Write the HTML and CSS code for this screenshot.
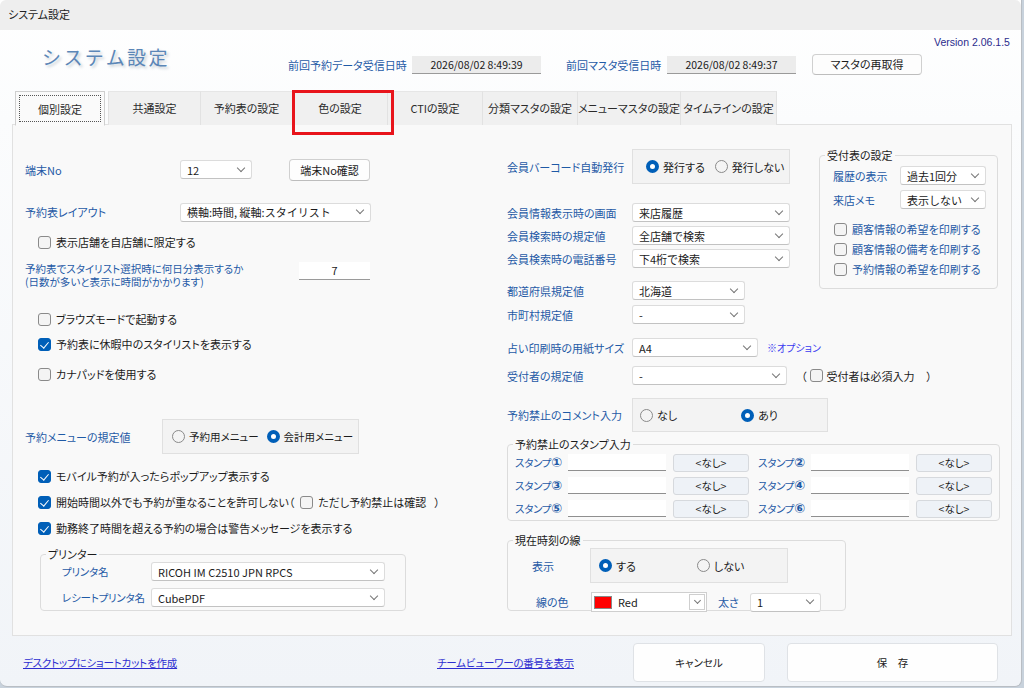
FILE: index.html
```html
<!DOCTYPE html>
<html lang="ja">

<head>
    <meta charset="UTF-8">
    <meta name="viewport" content="width=device-width, initial-scale=1.0">
    <title>システム設定</title>
    <link rel="stylesheet" href="styles.css">
</head>

<body>
    <div class="window">
        <div class="titlebar">システム設定</div>

        <div class="header">
            <div class="logo">システム設定</div>
            <div class="info">
                <span class="lbl">前回予約データ受信日時</span>
                <span class="datebox">2026/08/02 8:49:39</span>
                <span class="lbl lbl-2">前回マスタ受信日時</span>
                <span class="datebox">2026/08/02 8:49:37</span>
                <span class="btn btn-reget">マスタの再取得</span>
            </div>
            <div class="version">Version 2.06.1.5</div>
        </div>

        <ul class="tabs">
            <li class="tab active"><span>個別設定</span></li>
            <li class="tab t2">共通設定</li>
            <li class="tab t3">予約表の設定</li>
            <li class="tab t4 marked">色の設定</li>
            <li class="tab t5">CTIの設定</li>
            <li class="tab t6">分類マスタの設定</li>
            <li class="tab t7">メニューマスタの設定</li>
            <li class="tab t8">タイムラインの設定</li>
        </ul>

        <div class="panel">
            <!-- 左側 -->
            <div class="col-left">
                <div class="row r1">
                    <span class="label w155">端末No</span>
                    <span class="sel w72">12<i class="chev"></i></span>
                    <span class="btn btn-term">端末No確認</span>
                </div>
                <div class="row r2">
                    <span class="label w155">予約表レイアウト</span>
                    <span class="sel w191">横軸:時間, 縦軸:スタイリスト<i class="chev"></i></span>
                </div>
                <div class="row chk r3"><span class="cb"></span>表示店舗を自店舗に限定する</div>
                <div class="row r4">
                    <span class="label two w274"><span class="ln">予約表でスタイリスト選択時に何日分表示するか</span><span class="ln">(日数が多いと表示に時間がかかります)</span></span>
                    <span class="num">7</span>
                </div>
                <div class="row chk r5"><span class="cb"></span>ブラウズモードで起動する</div>
                <div class="row chk r6"><span class="cb on"></span>予約表に休暇中のスタイリストを表示する</div>
                <div class="row chk r7"><span class="cb"></span>カナパッドを使用する</div>
                <div class="row r8">
                    <span class="label w137">予約メニューの規定値</span>
                    <div class="radiobox rb-menu">
                        <span class="opt"><span class="rb"></span>予約用メニュー</span>
                        <span class="opt"><span class="rb on"></span>会計用メニュー</span>
                    </div>
                </div>
                <div class="row chk r9"><span class="cb on"></span>モバイル予約が入ったらポップアップ表示する</div>
                <div class="row chk r10"><span class="cb on"></span>開始時間以外でも予約が重なることを許可しない（
                    <span class="cb sub"></span>ただし予約禁止は確認 <span class="paren">）</span></div>
                <div class="row chk r11"><span class="cb on"></span>勤務終了時間を超える予約の場合は警告メッセージを表示する</div>

                <fieldset class="group printer">
                    <legend>プリンター</legend>
                    <div class="gbody">
                        <div class="row">
                            <span class="label w89">プリンタ名</span>
                            <span class="sel w234">RICOH IM C2510 JPN RPCS<i class="chev"></i></span>
                        </div>
                        <div class="row pr2">
                            <span class="label w89">レシートプリンタ名</span>
                            <span class="sel w234">CubePDF<i class="chev"></i></span>
                        </div>
                    </div>
                </fieldset>
            </div>

            <!-- 右側 -->
            <div class="col-right">
                <div class="top">
                    <div class="fields">
                        <div class="row q1">
                            <span class="label w125">会員バーコード自動発行</span>
                            <div class="radiobox rb-barcode">
                                <span class="opt"><span class="rb on"></span>発行する</span>
                                <span class="opt"><span class="rb"></span>発行しない</span>
                            </div>
                        </div>
                        <div class="row q2">
                            <span class="label w125">会員情報表示時の画面</span>
                            <span class="sel w158">来店履歴<i class="chev"></i></span>
                        </div>
                        <div class="row q3">
                            <span class="label w125">会員検索時の規定値</span>
                            <span class="sel w158">全店舗で検索<i class="chev"></i></span>
                        </div>
                        <div class="row q3">
                            <span class="label w125">会員検索時の電話番号</span>
                            <span class="sel w158">下4桁で検索<i class="chev"></i></span>
                        </div>
                        <div class="row q5">
                            <span class="label w125">都道府県規定値</span>
                            <span class="sel w113">北海道<i class="chev"></i></span>
                        </div>
                        <div class="row q6">
                            <span class="label w125">市町村規定値</span>
                            <span class="sel w113">-<i class="chev"></i></span>
                        </div>
                    </div>

                    <fieldset class="group reception">
                        <legend>受付表の設定</legend>
                        <div class="gbody">
                            <div class="row">
                                <span class="label w67">履歴の表示</span>
                                <span class="sel w86">過去1回分<i class="chev"></i></span>
                            </div>
                            <div class="row rc2">
                                <span class="label w67">来店メモ</span>
                                <span class="sel w86">表示しない<i class="chev"></i></span>
                            </div>
                            <div class="row chk blue rc3"><span class="cb"></span>顧客情報の希望を印刷する</div>
                            <div class="row chk blue rc4"><span class="cb"></span>顧客情報の備考を印刷する</div>
                            <div class="row chk blue rc4"><span class="cb"></span>予約情報の希望を印刷する</div>
                        </div>
                    </fieldset>
                </div>

                <div class="row q7">
                    <span class="label w125">占い印刷時の用紙サイズ</span>
                    <span class="sel w126">A4<i class="chev"></i></span>
                    <span class="option">※オプション</span>
                </div>
                <div class="row q8">
                    <span class="label w125">受付者の規定値</span>
                    <span class="sel w155">-<i class="chev"></i></span>
                    <span class="plain paren-l">（</span>
                    <span class="cb"></span>
                    <span class="plain">受付者は必須入力</span>
                    <span class="plain paren-r">）</span>
                </div>
                <div class="row q9">
                    <span class="label w125">予約禁止のコメント入力</span>
                    <div class="radiobox rb-comment">
                        <span class="opt"><span class="rb"></span>なし</span>
                        <span class="opt"><span class="rb on"></span>あり</span>
                    </div>
                </div>

                <fieldset class="group stamps">
                    <legend>予約禁止のスタンプ入力</legend>
                    <div class="gbody stamp-grid">
                        <span class="label">スタンプ<b class="circ">①</b></span><span class="field"></span><span class="btn-none">&lt;なし&gt;</span>
                        <span class="label">スタンプ<b class="circ">②</b></span><span class="field"></span><span class="btn-none">&lt;なし&gt;</span>
                        <span class="label">スタンプ<b class="circ">③</b></span><span class="field"></span><span class="btn-none">&lt;なし&gt;</span>
                        <span class="label">スタンプ<b class="circ">④</b></span><span class="field"></span><span class="btn-none">&lt;なし&gt;</span>
                        <span class="label">スタンプ<b class="circ">⑤</b></span><span class="field"></span><span class="btn-none">&lt;なし&gt;</span>
                        <span class="label">スタンプ<b class="circ">⑥</b></span><span class="field"></span><span class="btn-none">&lt;なし&gt;</span>
                    </div>
                </fieldset>

                <fieldset class="group timeline">
                    <legend>現在時刻の線</legend>
                    <div class="gbody">
                        <div class="row">
                            <span class="label w58">表示</span>
                            <div class="radiobox rb-time">
                                <span class="opt"><span class="rb on"></span>する</span>
                                <span class="opt"><span class="rb"></span>しない</span>
                            </div>
                        </div>
                        <div class="row tl2">
                            <span class="label w55">線の色</span>
                            <span class="colorsel"><i class="swatch"></i>Red<span class="dd"><i class="chev"></i></span></span>
                            <span class="label thick">太さ</span>
                            <span class="sel w71">1<i class="chev"></i></span>
                        </div>
                    </div>
                </fieldset>
            </div>
        </div>

        <div class="footer">
            <a class="link">デスクトップにショートカットを作成</a>
            <a class="link link-2">チームビューワーの番号を表示</a>
            <span class="fbtn cancel">キャンセル</span>
            <span class="fbtn save">保　存</span>
        </div>
    </div>
</body>

</html>
```

FILE: styles.css
```css
* {
    padding: 0;
    margin: 0;
    box-sizing: border-box;
}

li {
    list-style: none;
}

body {
    width: 1024px;
    height: 688px;
    overflow: hidden;
    background-color: #c8d2dc;
    font-family: "Noto Sans CJK JP", "Noto Sans", sans-serif;
    font-size: 11px;
    font-feature-settings: "palt";
    color: #1b1b1b;
}

.window {
    width: 1022px;
    height: 687px;
    background: linear-gradient(#ffffff 0, #fbfcfd 120px, #f1f4f8 100%);
    border: 1px solid #b9bec4;
    border-top: none;
    border-left: none;
    border-radius: 0 0 7px 7px;
    overflow: hidden;
}

.titlebar {
    height: 30px;
    line-height: 28px;
    padding-left: 8px;
    background-color: #eeeeee;
    font-size: 11px;
    color: #222;
    border-radius: 6px 6px 0 0;
}

/* ヘッダー */
.header {
    height: 61px;
    display: flex;
    align-items: flex-start;
}

.logo {
    width: 246px;
    margin-left: 42px;
    margin-top: 13px;
    font-size: 19px;
    letter-spacing: 2.4px;
    color: #5b86b7;
    text-shadow: 2px 2px 3px #c5ccd4;
    font-feature-settings: normal;
}

.info {
    display: flex;
    align-items: center;
    margin-top: 24px;
    height: 21px;
}

.lbl {
    color: #1f5aa6;
    width: 124px;
    font-size: 11px;
}

.lbl-2 {
    margin-left: 25px;
    width: 101px;
}

.datebox {
    width: 129px;
    height: 18px;
    line-height: 18px;
    text-align: center;
    background-color: #ececec;
    border-bottom: 1px solid #9a9a9a;
    font-size: 10.5px;
    font-feature-settings: normal;
}

.btn {
    display: inline-block;
    background-color: #fdfdfd;
    border: 1px solid #d0d0d0;
    border-bottom-color: #bdbdbd;
    border-radius: 4px;
    text-align: center;
}

.btn-reget {
    margin-left: 16px;
    width: 110px;
    height: 21px;
    line-height: 19px;
}

.version {
    margin-left: 12px;
    margin-top: 6px;
    font-family: "Liberation Sans", sans-serif;
    font-size: 10.5px;
    color: #2b2b8c;
}

/* タブ */
.tabs {
    display: flex;
    height: 34px;
    padding-left: 15px;
    position: relative;
    z-index: 1;
}

.tab {
    height: 34px;
    line-height: 33px;
    text-align: center;
    background-color: #f0f0f0;
    border-left: 1px solid #e2e2e2;
    border-top: 1px solid #e6e6e6;
    width: 95px;
    color: #2a2a2a;
}

.tab.active {
    width: 90px;
    background-color: #fafafa;
    border: 1px solid #cfcfcf;
    border-bottom: 1px solid #fafafa;
    height: 35px;
    padding: 3px;
    line-height: 26px;
    margin-right: 3px;
}

.tab.active span {
    display: block;
    border: 1px dotted #555;
    height: 27px;
}

.t2 {
    width: 92px;
}

.t3 {
    width: 92px;
}

.t7 {
    width: 103px;
}

.t8 {
    width: 97px;
    border-right: 1px solid #e2e2e2;
}

.marked {
    position: relative;
}

/* 赤枠の注記 */
.marked::after {
    content: "";
    position: absolute;
    left: -1px;
    top: -2px;
    width: 96px;
    height: 39px;
    border: 3px solid #e8141b;
}

/* パネル */
.panel {
    margin-left: 12px;
    width: 1000px;
    height: 512px;
    margin-top: -1px;
    background-color: #f9f9f9;
    border: 1px solid #e1e1e1;
    display: flex;
    padding-top: 24px;
}

.col-left {
    width: 494px;
    padding-left: 12px;
    padding-top: 9px;
}

.col-right {
    width: 500px;
}

.row {
    display: flex;
    align-items: center;
    white-space: nowrap;
}

.label {
    color: #1f5aa6;
    flex-shrink: 0;
}

.label.two {
    display: flex;
    flex-direction: column;
    gap: 1px;
    font-size: 10.5px;
}

.label.two .ln {
    height: 12px;
    line-height: 12px;
}

.w55 { width: 55px; }
.w58 { width: 58px; }
.w67 { width: 67px; }
.w71 { width: 71px; }
.w72 { width: 72px; }
.w86 { width: 86px; }
.w89 { width: 89px; }
.w113 { width: 113px; }
.w125 { width: 125px; }
.w126 { width: 126px; }
.w137 { width: 137px; }
.w155 { width: 155px; }
.w158 { width: 158px; }
.w191 { width: 191px; }
.w234 { width: 234px; }
.w274 { width: 274px; }

.sel {
    display: flex;
    align-items: center;
    justify-content: space-between;
    flex-shrink: 0;
    height: 19px;
    padding: 0 5px 0 6px;
    background-color: #fff;
    border: 1px solid #dcdcdc;
    border-bottom-color: #c2c2c2;
    border-radius: 3px;
    white-space: nowrap;
    font-feature-settings: normal;
}

.chev {
    display: inline-block;
    width: 6px;
    height: 6px;
    border-right: 1px solid #777;
    border-bottom: 1px solid #777;
    transform: rotate(45deg);
    margin-top: -4px;
    margin-right: 2px;
}

.chk {
    padding-left: 13px;
    height: 18px;
}

.cb {
    display: inline-block;
    width: 13px;
    height: 13px;
    border: 1px solid #8a8a8a;
    border-radius: 3px;
    background-color: #f4f4f4;
    margin-right: 5px;
    flex-shrink: 0;
    position: relative;
}

.cb.on {
    background-color: #005fb8;
    border-color: #005fb8;
}

.cb.on::after {
    content: "";
    position: absolute;
    left: 3px;
    top: 1px;
    width: 4px;
    height: 7px;
    border-right: 1.5px solid #fff;
    border-bottom: 1.5px solid #fff;
    transform: rotate(40deg);
}

.rb {
    display: inline-block;
    width: 13px;
    height: 13px;
    border: 1px solid #8a8a8a;
    border-radius: 50%;
    background-color: #f4f4f4;
    margin-right: 4px;
    flex-shrink: 0;
}

.rb.on {
    border: 4px solid #005fb8;
    background-color: #fff;
}

.opt {
    display: flex;
    align-items: center;
    white-space: nowrap;
}

.radiobox {
    display: flex;
    align-items: center;
    background-color: #f3f3f3;
    border: 1px solid #e0e0e0;
    height: 35px;
}

/* 左側の行 */
.r1 {
    height: 23px;
}

.btn-term {
    margin-left: 37px;
    width: 81px;
    height: 22px;
    line-height: 20px;
}

.r2 {
    margin-top: 21px;
    height: 20px;
}

.r3 {
    margin-top: 11px;
}

.r4 {
    margin-top: 12px;
    height: 26px;
    align-items: flex-start;
}

.num {
    width: 71px;
    height: 18px;
    line-height: 17px;
    text-align: center;
    background-color: #fff;
    border-bottom: 1px solid #9a9a9a;
    margin-top: -1px;
}

.r5 {
    margin-top: 21px;
}

.r6 {
    margin-top: 7px;
}

.r7 {
    margin-top: 12px;
}

.r8 {
    margin-top: 36px;
}

.rb-menu {
    width: 197px;
    padding-left: 9px;
    font-size: 10.5px;
}

.rb-menu .opt + .opt {
    margin-left: 8px;
}

.r9 {
    margin-top: 13px;
}

.r10,
.r11 {
    margin-top: 8px;
}

.cb.sub {
    margin-left: 6px;
}

.paren {
    margin-left: 8px;
}

/* グループ枠 */
.group {
    border: 1px solid #dcdcdc;
    border-radius: 4px;
    padding: 0;
}

.group legend {
    margin-left: 5px;
    padding: 0 2px;
    font-size: 11px;
    line-height: 14px;
    color: #1b1b1b;
}

.printer {
    margin-top: 10px;
    margin-left: 15px;
    width: 366px;
    height: 64px;
}

.printer .gbody {
    padding: 1px 0 0 21px;
}

.printer .label {
    font-size: 10.5px;
    letter-spacing: -0.2px;
}

.pr2 {
    margin-top: 7px;
}

/* 右側 */
.top {
    display: flex;
    align-items: flex-start;
}

.fields {
    width: 290px;
}

.q1 {
    height: 35px;
}

.rb-barcode {
    width: 158px;
    padding-left: 13px;
}

.rb-barcode .opt + .opt {
    margin-left: 10px;
}

.q2 {
    margin-top: 19px;
    height: 19px;
}

.q3 {
    margin-top: 4px;
    height: 19px;
}

.q5 {
    margin-top: 13px;
    height: 19px;
}

.q6 {
    margin-top: 5px;
    height: 19px;
}

.reception {
    margin-left: 22px;
    margin-top: -1px;
    width: 179px;
    height: 141px;
}

.reception .gbody {
    padding: 4px 0 0 13px;
}

.rc2 {
    margin-top: 5px;
}

.rc3 {
    margin-top: 11px;
    padding-left: 1px;
}

.rc4 {
    margin-top: 2px;
    padding-left: 1px;
}

.blue {
    color: #1f5aa6;
}

.q7 {
    margin-top: 14px;
    height: 19px;
}

.option {
    margin-left: 9px;
    color: #3a3af0;
    font-size: 10px;
}

.q8 {
    margin-top: 9px;
    height: 19px;
}

.plain {
    color: #1b1b1b;
}

.paren-l {
    margin-left: 14px;
    margin-right: 3px;
}

.q8 .cb {
    margin-right: 4px;
}

.paren-r {
    margin-left: 12px;
}

.q9 {
    margin-top: 13px;
}

.rb-comment {
    width: 196px;
    height: 34px;
    padding-left: 7px;
}

.rb-comment .opt + .opt {
    margin-left: 64px;
}

.stamps {
    margin-top: 5px;
    width: 493px;
    height: 84px;
}

.stamp-grid {
    display: grid;
    grid-template-columns: 53px 98px 92px 53px 98px 83px;
    grid-auto-rows: 17px;
    row-gap: 6px;
    align-items: center;
    padding: 3px 0 0 7px;
}

.stamp-grid .label {
    font-size: 10.5px;
    letter-spacing: -0.3px;
    line-height: 17px;
}

.circ {
    font-weight: bold;
    font-size: 13px;
    font-family: "DejaVu Sans", sans-serif;
    letter-spacing: 0;
    font-feature-settings: normal;
}

.field {
    height: 17px;
    background-color: #fff;
    border-bottom: 1px solid #8f8f8f;
}

.btn-none {
    height: 18px;
    line-height: 16px;
    margin-left: 7px;
    width: 76px;
    text-align: center;
    background-color: #eef2f7;
    border: 1px solid #d6d9dd;
    border-radius: 3px;
    font-size: 10.5px;
}

.timeline {
    margin-top: 12px;
    width: 339px;
    height: 78px;
}

.timeline .gbody {
    padding: 1px 0 0 24px;
}

.rb-time {
    width: 198px;
    height: 35px;
    padding-left: 8px;
}

.rb-time .opt + .opt {
    margin-left: 61px;
}

.tl2 {
    margin-top: 9px;
    padding-left: 4px;
}

.colorsel {
    display: flex;
    align-items: center;
    width: 116px;
    height: 20px;
    padding-left: 2px;
    background-color: #fff;
    border: 1px solid #cfcfcf;
}

.swatch {
    display: inline-block;
    width: 18px;
    height: 13px;
    background-color: #ff0000;
    border: 1px solid #888;
    margin-right: 6px;
}

.dd {
    margin-left: auto;
    margin-right: 1px;
    width: 16px;
    height: 16px;
    border: 1px solid #cfcfcf;
    display: flex;
    align-items: center;
    justify-content: center;
}

.dd .chev {
    margin: -3px 0 0 0;
    width: 5px;
    height: 5px;
}

.thick {
    margin-left: 11px;
    width: 32px;
}

/* フッター */
.footer {
    height: 52px;
    display: flex;
    align-items: center;
    padding-left: 23px;
}

.link {
    flex: none;
    color: #2d2dd0;
    text-decoration: underline;
    font-size: 10.5px;
    letter-spacing: -0.2px;
}

.link:first-child {
    width: 414px;
}

.link-2 {
    width: 196px;
}

.fbtn {
    height: 39px;
    line-height: 37px;
    text-align: center;
    background-color: #fefefe;
    border: 1px solid #dfe2e6;
    border-radius: 4px;
    font-size: 10.5px;
}

.cancel {
    width: 132px;
}

.save {
    margin-left: 22px;
    width: 211px;
}
```
